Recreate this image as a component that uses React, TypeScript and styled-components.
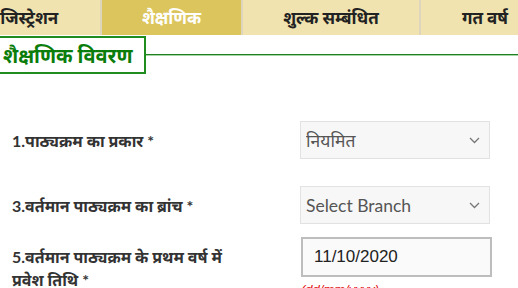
import React from "react";
import styled, { createGlobalStyle } from "styled-components";

const tabs = [
  { title: "रजिस्ट्रेशन", width: 151, active: false },
  { title: "शैक्षणिक", width: 141, active: true },
  { title: "शुल्क सम्बंधित", width: 178, active: false },
  { title: "गत वर्ष", width: 130, active: false },
];

const Chevron = () => (
  <svg width="11" height="7" viewBox="0 0 11 7">
    <path d="M1 1l4.5 4.5L10 1" fill="none" stroke="#777" strokeWidth="1.3" />
  </svg>
);

const App = () => {
  return (
    <>
      <GlobalStyle />
      <Page>
        <TabBar>
          {tabs.map((t) => (
            <Tab key={t.title} $width={t.width} $active={t.active}>
              {t.title}
            </Tab>
          ))}
        </TabBar>

        <SectionHead>
          <Legend>शैक्षणिक विवरण</Legend>
          <Rule />
        </SectionHead>

        <Row $top={47}>
          <Label>1.पाठ्यक्रम का प्रकार *</Label>
          <SelectWrap>
            <Select defaultValue="niyamit">
              <option value="niyamit">नियमित</option>
            </Select>
            <Arrow>
              <Chevron />
            </Arrow>
          </SelectWrap>
        </Row>

        <Row $top={27}>
          <Label>3.वर्तमान पाठ्यक्रम का ब्रांच *</Label>
          <SelectWrap>
            <Select defaultValue="">
              <option value="">Select Branch</option>
            </Select>
            <Arrow>
              <Chevron />
            </Arrow>
          </SelectWrap>
        </Row>

        <Row $top={13}>
          <Label>
            5.वर्तमान पाठ्यक्रम के प्रथम वर्ष में
            <br />
            प्रवेश तिथि *
          </Label>
          <div>
            <DateInput defaultValue="11/10/2020" />
            <Hint>(dd/mm/yyyy)</Hint>
          </div>
        </Row>
      </Page>
    </>
  );
};

export default App;

const GlobalStyle = createGlobalStyle`
  body {
    margin: 0;
    font-family: Lato, "Noto Sans", sans-serif;
    background: #fff;
    overflow: hidden;
  }
`;

const Page = styled.div`
  width: 518px;
  height: 288px;
  overflow: hidden;
`;

const TabBar = styled.nav`
  display: flex;
  height: 35px;
  margin-left: -49px;
  width: 640px;
`;

const Tab = styled.div<{ $width: number; $active: boolean }>`
  flex: 0 0 ${(p) => p.$width}px;
  display: flex;
  align-items: center;
  justify-content: center;
  background: ${(p) => (p.$active ? "#dcc55c" : "#f0e3af")};
  color: ${(p) => (p.$active ? "#ffffff" : "#222")};
  border-right: 2px solid #ddd6bd;
  font-size: 17px;
  font-weight: 700;
  box-sizing: border-box;
`;

const SectionHead = styled.div`
  display: flex;
  align-items: center;
  margin-top: 1px;
  margin-left: -2px;
`;

const Legend = styled.div`
  box-sizing: border-box;
  height: 38px;
  width: 148px;
  border: 2px solid #1f8c1f;
  display: flex;
  align-items: center;
  padding-left: 3px;
  color: #0b7d0b;
  font-size: 20px;
  font-weight: 700;
  white-space: nowrap;
`;

const Rule = styled.div`
  flex: 1;
  height: 1px;
  background: #217f21;
  box-shadow: 0 1px 0 #a6d6a6;
  margin-top: -1px;
`;

const Row = styled.div<{ $top: number }>`
  display: grid;
  grid-template-columns: 300px 191px;
  align-items: start;
  margin-top: ${(p) => p.$top}px;
`;

const Label = styled.div`
  padding: 8px 0 0 12px;
  line-height: 23px;
  font-size: 16px;
  font-weight: 700;
  color: #333;
  white-space: nowrap;
`;

const SelectWrap = styled.div`
  position: relative;
  width: 190px;
`;

const Select = styled.select`
  appearance: none;
  box-sizing: border-box;
  width: 190px;
  height: 38px;
  background: #f7f7f7;
  border: 1px solid #e2e2e2;
  border-radius: 0;
  padding: 0 24px 0 5px;
  font-family: Lato, "Noto Sans", sans-serif;
  font-size: 17.5px;
  color: #555;
  outline: none;
`;

const Arrow = styled.span`
  position: absolute;
  right: 10px;
  top: 16px;
  display: flex;
  pointer-events: none;
`;

const DateInput = styled.input`
  box-sizing: border-box;
  display: block;
  width: 191px;
  height: 40px;
  margin-left: 1px;
  background: #fafafa;
  border: 2px solid #bdbdbd;
  padding: 0 0 0 11px;
  font-family: "Liberation Sans", Arial, sans-serif;
  font-size: 17px;
  color: #222;
  outline: none;
`;

const Hint = styled.div`
  margin: 5px 0 0 1px;
  color: #e01010;
  font-size: 13px;
  font-style: italic;
  font-family: "Liberation Sans", Arial, sans-serif;
`;
